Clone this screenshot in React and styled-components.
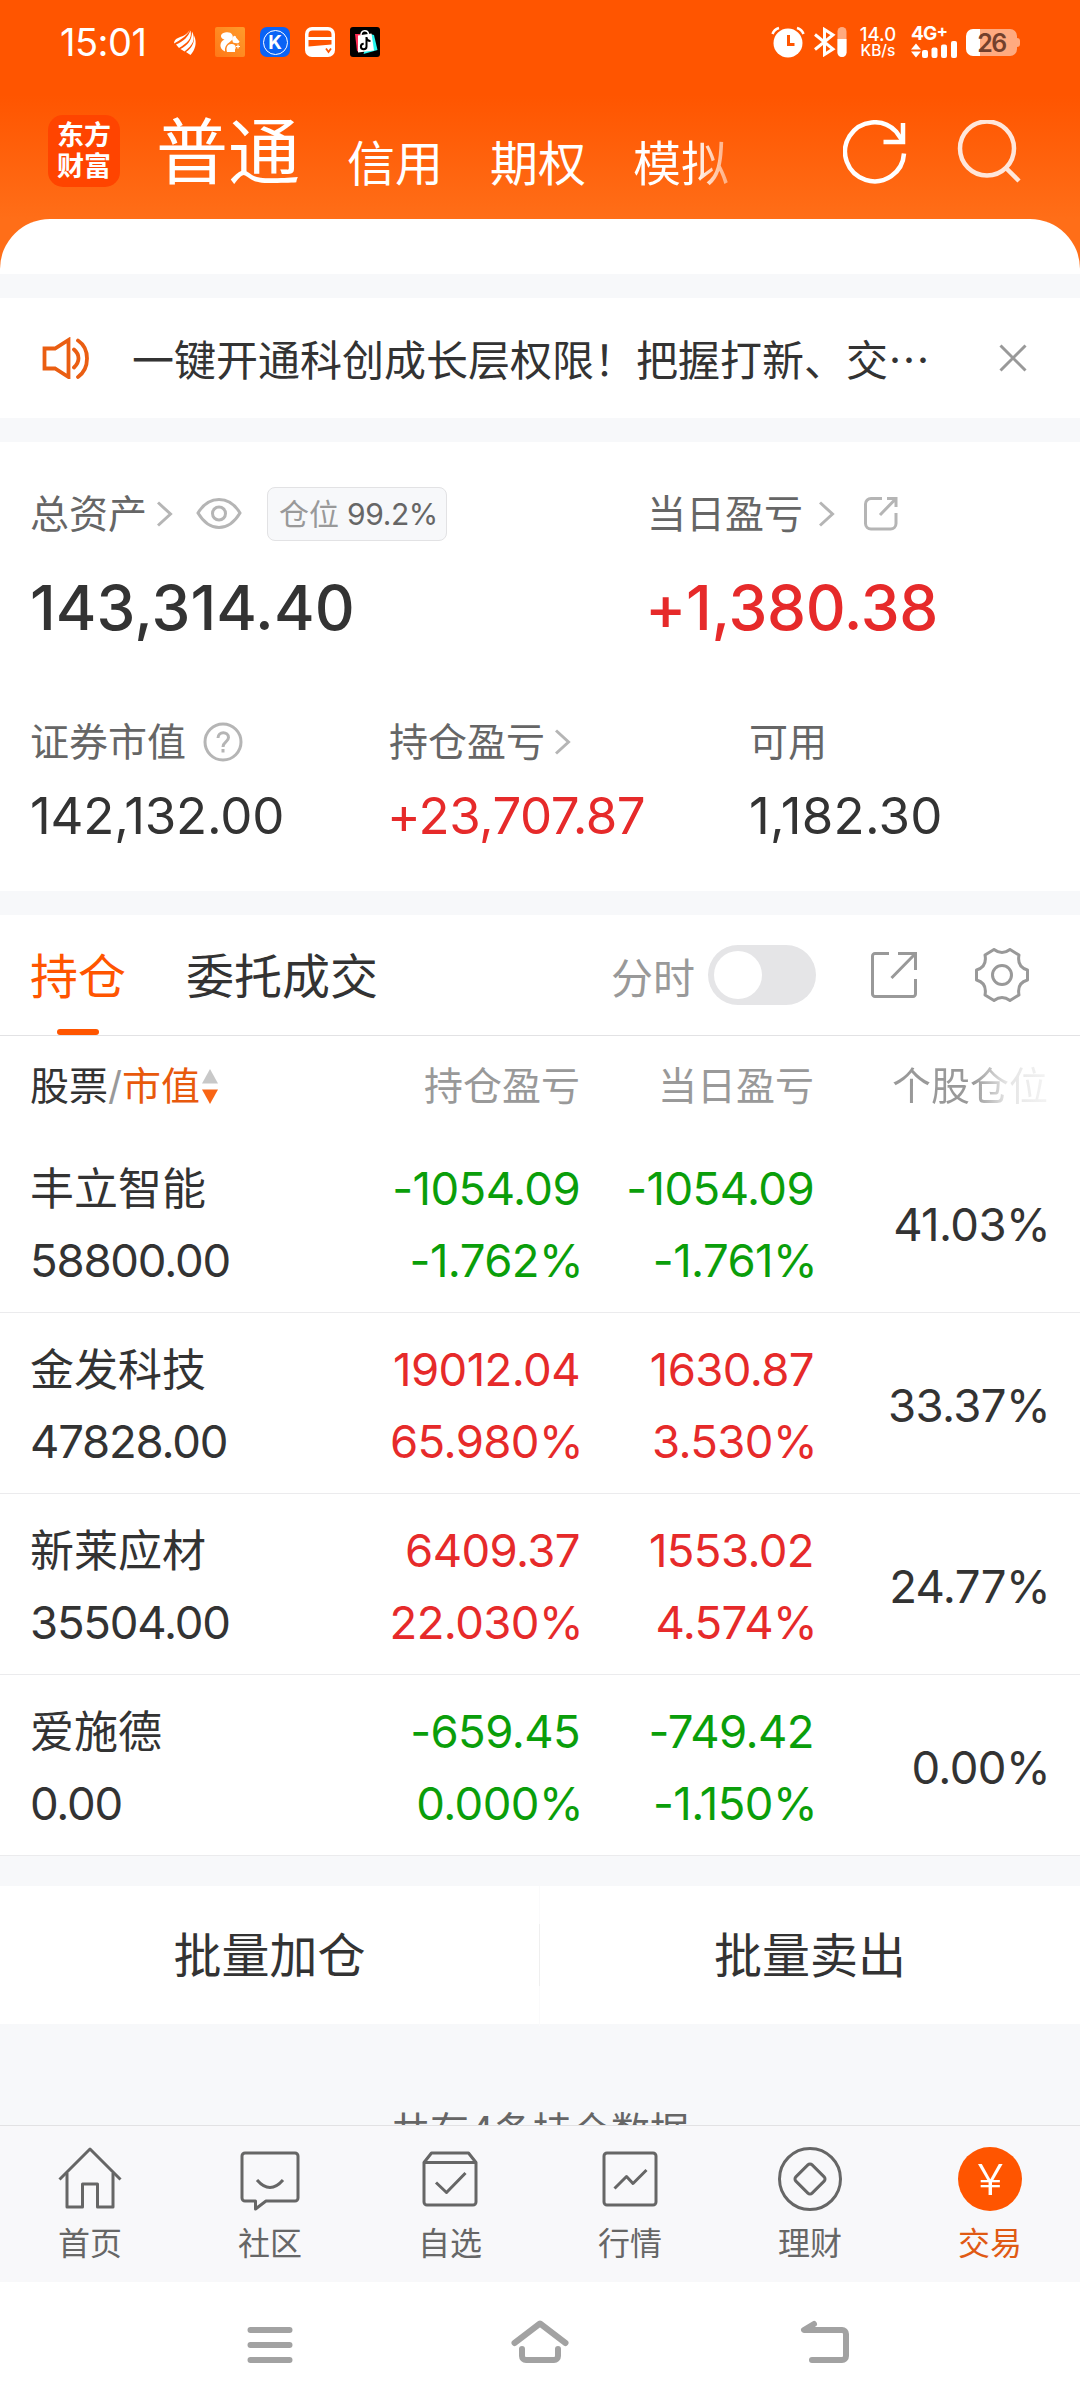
import React, { useState } from "react";
import styled, { createGlobalStyle, css } from "styled-components";

const COLORS = {
  orange: "#ff5500",
  text: "#333333",
  label: "#666666",
  muted: "#999999",
  icon: "#b5b5b5",
  up: "#e62a2a",
  down: "#0a9e0a",
  page: "#f7f8fa",
  line: "#e2e2e4",
};

const GlobalStyle = createGlobalStyle`
  * {
    box-sizing: border-box;
  }
  body {
    margin: 0;
    background: #fff;
    color: ${COLORS.text};
    font-family: Inter, "Noto Sans CJK SC", sans-serif;
  }
  svg {
    display: block;
    flex: none;
  }
`;

const Screen = styled.div`
  width: 1080px;
  height: 2408px;
  display: flex;
  flex-direction: column;
  overflow: hidden;
  background: ${COLORS.page};
  white-space: nowrap;
`;

/* ---------- header ---------- */

const Header = styled.header`
  height: 274px;
  flex: none;
  display: flex;
  flex-direction: column;
  color: #fff;
  background: linear-gradient(#ff5500 95px, #ff6e18 219px);
`;

const StatusBar = styled.div`
  height: 84px;
  padding: 0 60px;
  display: flex;
  align-items: center;
  justify-content: space-between;
`;

const Clock = styled.span`
  width: 97px;
  font-size: 38px;
  line-height: 85px;
  letter-spacing: -0.5px;
`;

const StatusGroup = styled.div`
  display: flex;
  align-items: center;
  gap: ${(props) => props.gap};
`;

const AppBadge = styled.span`
  width: 30px;
  height: 30px;
  border-radius: 7px;
  display: flex;
  align-items: center;
  justify-content: center;
  background: #0a63f5;

  span {
    width: 25px;
    height: 25px;
    border: 1px solid #fff;
    border-radius: 50%;
    font-size: 19px;
    font-weight: 700;
    line-height: 23px;
    text-align: center;
  }
`;

const NetSpeed = styled.div`
  width: 38px;
  margin: 0 5px 0 3px;
  display: flex;
  flex-direction: column;
  align-items: center;
  font-size: 18.5px;
  font-weight: 500;
  line-height: 16px;

  small {
    font-size: 15.5px;
    line-height: 17px;
  }
`;

const Signal = styled.div`
  width: 46px;
  font-size: 19px;
  font-weight: 700;
  line-height: 14px;
  letter-spacing: -0.8px;

  sup {
    font-size: 17px;
    line-height: 0;
    vertical-align: 3px;
  }
`;

const Battery = styled.div`
  width: 51px;
  height: 27px;
  border-radius: 7px;
  color: #74402c;
  font-size: 25px;
  font-weight: 600;
  line-height: 28px;
  text-align: center;
  letter-spacing: -1.5px;
  background: linear-gradient(90deg, #fff 14px, #ffaa80 14px);
`;

const BatteryTip = styled.i`
  width: 3px;
  height: 9px;
  border-radius: 0 3px 3px 0;
  background: #ffaa80;
`;

const TitleBar = styled.div`
  height: 135px;
  padding: 0 59px 0 48px;
  display: flex;
  align-items: flex-start;
`;

const Logo = styled.div`
  width: 72px;
  height: 72px;
  margin: 31px 36px 0 0;
  padding: 3px 0 0 9px;
  border-radius: 15px;
  background: #ff4400;
  font-family: "Noto Sans CJK SC", sans-serif;
  font-size: 27px;
  font-weight: 700;
  line-height: 31px;
  white-space: normal;
  word-break: break-all;
`;

const AccountTabs = styled.nav`
  flex: 1;
  display: flex;
  align-items: flex-start;
  gap: 47px;
`;

const AccountTab = styled.span`
  margin-top: ${(props) => (props.active ? "24px" : "36px")};
  font-size: ${(props) => (props.active ? "72px" : "48px")};
  line-height: 88px;
  ${(props) =>
    props.faded &&
    css`
      color: transparent;
      background: linear-gradient(90deg, #fff 60px, rgba(255, 255, 255, 0.45) 96px);
      background-clip: text;
    `}
`;

const HeaderIcons = styled.div`
  display: flex;
  gap: 50px;
  padding-top: 36px;
`;

const Sheet = styled.div`
  height: 55px;
  border-radius: 50px 50px 0 0;
  background: #fff;
`;

/* ---------- notice ---------- */

const Notice = styled.section`
  height: 120px;
  flex: none;
  margin: 24px 0;
  padding: 0 53px 0 42px;
  display: flex;
  align-items: center;
  background: #fff;
`;

const NoticeText = styled.p`
  flex: 1;
  margin: 0 0 0 42px;
  font-family: "Noto Sans CJK SC", sans-serif;
  font-size: 42px;
  line-height: 60px;
`;

/* ---------- assets ---------- */

const Assets = styled.section`
  height: 449px;
  flex: none;
  padding: 45px 30px 0;
  background: #fff;
`;

const AssetRow = styled.div`
  display: grid;
  grid-template-columns: ${(props) => props.columns};
  margin-bottom: ${(props) => props.space || 0};
`;

const Label = styled.div`
  height: 54px;
  display: flex;
  align-items: center;
  color: ${COLORS.label};
  font-size: 39px;
  line-height: 54px;
`;

const IconBox = styled.span`
  margin-left: ${(props) => props.gap};
`;

const Ratio = styled.span`
  width: 180px;
  height: 54px;
  margin-left: 25px;
  padding-left: 11px;
  border: 1px solid ${COLORS.line};
  border-radius: 8px;
  background: ${COLORS.page};
  color: ${COLORS.muted};
  font-size: 30px;
  line-height: 53px;

  b {
    margin-left: 8px;
    color: ${COLORS.label};
    font-weight: 400;
    letter-spacing: -0.4px;
  }
`;

const Amount = styled.div`
  color: ${(props) => (props.up ? COLORS.up : COLORS.text)};
  font-size: ${(props) => (props.large ? "62px" : "51px")};
  font-weight: ${(props) => (props.large ? 500 : 400)};
  line-height: 76px;
  margin-top: ${(props) => (props.large ? "29px" : "9px")};
  margin-left: ${(props) => (props.up ? "-2px" : "0")};
  letter-spacing: ${(props) => props.track || "0"};
`;

/* ---------- positions ---------- */

const TabBar = styled.div`
  height: 121px;
  flex: none;
  margin-top: 24px;
  padding: 0 51px 0 30px;
  display: flex;
  align-items: center;
  background: #fff;
  border-bottom: 1px solid ${COLORS.line};
`;

const Tab = styled.span`
  position: relative;
  height: 120px;
  margin-right: 60px;
  color: ${(props) => (props.active ? COLORS.orange : COLORS.text)};
  font-size: 48px;
  line-height: 123px;

  ${(props) =>
    props.active &&
    css`
      &::after {
        content: "";
        position: absolute;
        left: 27px;
        bottom: 0;
        width: 42px;
        height: 6px;
        border-radius: 3px;
        background: ${COLORS.orange};
      }
    `}
`;

const ToggleLabel = styled.span`
  margin: 0 13px 0 auto;
  color: ${COLORS.muted};
  font-size: 42px;
`;

const Toggle = styled.button`
  width: 108px;
  height: 60px;
  margin-right: 55px;
  padding: 6px;
  border: 0;
  border-radius: 30px;
  background: #e5e5e7;
  display: flex;
  justify-content: ${(props) => (props.on ? "flex-end" : "flex-start")};

  &::before {
    content: "";
    width: 48px;
    height: 48px;
    border-radius: 50%;
    background: #fff;
  }
`;

const gridColumns = css`
  display: grid;
  grid-template-columns: 331px 219px 234px 1fr;
  padding: 0 32px 0 30px;
  background: #fff;
`;

const TableHead = styled.div`
  ${gridColumns}
  height: 96px;
  flex: none;
  color: ${COLORS.muted};
  font-size: 39px;
  line-height: 99px;
  text-align: right;
`;

const SortHead = styled.div`
  display: flex;
  align-items: center;
  color: ${COLORS.text};

  i {
    color: ${COLORS.muted};
    font-style: normal;
  }
  b {
    margin-right: 2px;
    color: #e8590c;
    font-weight: 400;
  }
`;

const FadedHead = styled.div`
  color: transparent;
  background: linear-gradient(90deg, ${COLORS.muted} 68%, #e4e4e4 82%, #f2f2f2 98%);
  background-clip: text;
`;

const Row = styled.div`
  ${gridColumns}
  height: 181px;
  flex: none;
  padding-top: 21px;
  border-bottom: 1px solid #ebebed;
  font-size: 45.5px;
  line-height: 72px;
`;

const Cell = styled.div`
  text-align: right;
  letter-spacing: -0.6px;
  color: ${(props) => COLORS[props.tone] || COLORS.text};
`;

const Percent = styled.span`
  display: block;
  margin-right: -3px;
`;

const NameCell = styled.div`
  letter-spacing: -1.2px;

  span {
    display: block;
    font-size: 44px;
    letter-spacing: 0;
  }
`;

const RatioCell = styled(Cell)`
  margin-right: -2px;
  line-height: 144px;
`;

/* ---------- batch actions ---------- */

const Actions = styled.div`
  height: 138px;
  flex: none;
  margin-top: 30px;
  display: grid;
  grid-template-columns: 539px 1px 1fr;
  background: #fff;
  font-size: 48px;
  line-height: 140px;
  text-align: center;

  i {
    background: linear-gradient(#fafafb 38px, #efefef 38px 100px, #fafafb 100px);
  }
`;

const Footnote = styled.div`
  height: 101px;
  flex: none;
  padding-top: 80px;
  overflow: hidden;
  color: ${COLORS.label};
  font-size: 39px;
  line-height: 54px;
  text-align: center;
`;

/* ---------- bottom bars ---------- */

const NavBar = styled.nav`
  height: 157px;
  flex: none;
  display: grid;
  grid-template-columns: repeat(6, 1fr);
  border-top: 1px solid ${COLORS.line};
  background: #f8f8fa;
`;

const NavItem = styled.div`
  display: flex;
  flex-direction: column;
  align-items: center;
  gap: 13px;
  padding-top: 21px;
  color: ${(props) => (props.active ? "#e05a14" : COLORS.label)};
  font-size: 32px;
  line-height: 40px;
`;

const YuanBadge = styled.span`
  width: 64px;
  height: 64px;
  border-radius: 50%;
  background: ${COLORS.orange};
  color: #fff;
  font-size: 42px;
  font-weight: 300;
  line-height: 65px;
  text-align: center;

  span {
    display: inline-block;
    transform: scaleX(1.15);
  }
`;

const SystemBar = styled.div`
  height: 126px;
  flex: none;
  padding: 0 228px;
  display: flex;
  align-items: center;
  justify-content: space-between;
  background: #fff;
`;

/* ---------- icons ---------- */

const Stroke = ({ w, h, color = "currentColor", width = 3, children, ...rest }) => (
  <svg
    width={w}
    height={h}
    viewBox={`0 0 ${w} ${h}`}
    fill="none"
    stroke={color}
    strokeWidth={width}
    {...rest}
  >
    {children}
  </svg>
);

const Chevron = () => (
  <Stroke w={16} h={26} color={COLORS.icon}>
    <path d="M1 1.500 13.500 13 1 24.500" />
  </Stroke>
);

const EyeIcon = () => (
  <Stroke w={46} h={32} color={COLORS.icon}>
    <path d="M2 15C8 5 15 1.500 23 1.500s15 3.500 21 13.500C38 25 31 29.500 23 29.500S8 25 2 15Z" />
    <circle cx="23" cy="15.500" r="6.500" />
  </Stroke>
);

const HelpIcon = () => (
  <Stroke w={40} h={40} color={COLORS.icon}>
    <circle cx="20" cy="20" r="18" />
    <path d="M15 16c0-7 10.500-7 10.500-.5 0 4.500-5.500 4.500-5.500 9.500" />
    <path d="M20 27v3.500" />
  </Stroke>
);

const ShareSmallIcon = () => (
  <Stroke w={34} h={34} color={COLORS.icon}>
    <path d="M18 1.500H7A5.500 5.500 0 0 0 1.500 7v19.500A5.500 5.500 0 0 0 7 32h19.500a5.500 5.500 0 0 0 5.500-5.500V16" />
    <path d="M23 1.500h9V10M32 1.500 16 18" />
  </Stroke>
);

const ShareIcon = () => (
  <Stroke w={46} h={46} color={COLORS.muted}>
    <path d="M18 1.500H4A2.500 2.500 0 0 0 1.500 4v38A2.500 2.500 0 0 0 4 44.500h38a2.500 2.500 0 0 0 2.500-2.500V27" />
    <path d="M27 1.500h17.500V18M44.500 1.500 20.500 26" />
  </Stroke>
);

const GearIcon = () => (
  <Stroke w={54} h={54} color={COLORS.muted} strokeLinejoin="round">
    <path d="M19 1.500q8 6 16 0L44 7c-1.500 8 1 13 8.500 15v10c-7.500 2-10 7-8.500 15l-9 5.500q-8-6-16 0L10 47c1.500-8-1-13-8.500-15V22C9 20 11.500 15 10 7Z" />
    <circle cx="27" cy="27" r="9.500" />
  </Stroke>
);

const SortIcon = () => (
  <svg width="16" height="36" viewBox="0 0 16 36">
    <path d="M8 1l8 14.500H0z" fill="#c8c8c8" />
    <path d="M8 36l8-14.500H0z" fill="#f96515" />
  </svg>
);

const SpeakerIcon = () => (
  <Stroke w={48} h={42} color="#ea5e12" width={3.8} strokeLinecap="round">
    <path d="M2.500 11.500H13L26.500 3v37L13 31.500H2.500Z" />
    <path d="M32 12.500c6 5 6 12.500 0 18M36 3.500c12 8 12 28 0 36.500" />
  </Stroke>
);

const CloseIcon = () => (
  <Stroke w={28} h={28} color={COLORS.muted}>
    <path d="M1.500 1.500l25 25M26.500 1.500l-25 25" />
  </Stroke>
);

const RefreshIcon = () => (
  <Stroke w={64} h={64} width={4.5}>
    <path d="M61 33.500A29.500 29.500 0 1 1 53 11.500L59 20" />
    <path d="M60 3v19H40.500" />
  </Stroke>
);

const SearchIcon = () => (
  <Stroke w={64} h={66} width={4.5} color="#ffe6da">
    <circle cx="30" cy="28.500" r="27" />
    <path d="M48.500 47.500 62 61" />
  </Stroke>
);

const navIcons = {
  home: (
    <>
      <path d="M1.500 32.500 32 2 62.500 32.500" />
      <path d="M9 26v34h15.500V37h15v23H55V26" />
    </>
  ),
  chat: (
    <>
      <path d="M7 6h50a3 3 0 0 1 3 3v42a3 3 0 0 1-3 3H28l-10.500 8V54H7a3 3 0 0 1-3-3V9a3 3 0 0 1 3-3Z" />
      <path d="M19 33q13 15 26 0" />
    </>
  ),
  pick: (
    <>
      <path d="M6 15.500 13.500 6h37L58 15.500V55a3 3 0 0 1-3 3H9a3 3 0 0 1-3-3ZM6 15.500h52" />
      <path d="M18 35.500 28.500 45.500 47.500 26" />
    </>
  ),
  market: (
    <>
      <rect x="6" y="6" width="52" height="52" rx="3" />
      <path d="M16.500 41.500 28.500 29.500 35 36.500 48.500 23" />
    </>
  ),
  wealth: (
    <>
      <circle cx="32" cy="32" r="30.500" />
      <rect x="20.500" y="20.500" width="23" height="23" rx="3" transform="rotate(45 32 32)" />
    </>
  ),
};

const AlarmIcon = () => (
  <svg width="34" height="32" viewBox="0 0 34 32" fill="none">
    <circle cx="17" cy="17" r="14.500" fill="#fff" />
    <path d="M17.500 9v9.500h6" stroke={COLORS.orange} strokeWidth="3" />
    <path d="M1.500 8Q3 3.500 8 2M32.500 8Q31 3.500 26 2" stroke="#fff" strokeWidth="2.500" />
  </svg>
);

const BluetoothIcon = () => (
  <svg width="33" height="30" viewBox="0 0 33 30" fill="none">
    <path d="M1 7.500 19 22 10.500 27.500v-25L19 8 1 22.500" stroke="#fff" strokeWidth="3" />
    <rect x="23.500" width="9" height="30" rx="4.500" fill="#ffaa80" />
    <path d="M23.500 12h9v13.500a4.500 4.500 0 0 1-9 0Z" fill="#fff" />
  </svg>
);

const SignalBars = () => (
  <svg width="46" height="17" viewBox="0 0 46 17" fill="#fff">
    <path d="M0 8.500 5 2.500 10 8.500ZM0 10.500 5 16.500 10 10.500Z" />
    <rect x="11" y="9" width="6" height="8" rx="2" />
    <rect x="20.500" y="6.500" width="6" height="10.500" rx="2" />
    <rect x="30" y="3.500" width="6" height="13.500" rx="2" />
    <rect x="40" y="0" width="6" height="17" rx="2" />
  </svg>
);

const WingIcon = () => (
  <svg width="26" height="25" viewBox="0 0 26 25" fill="#fff">
    <path d="M0 13.500C0 8 6 7.500 10 5.500 13 4 14 2 16 0 12 7 6 10 0 13.500Z" />
    <path d="M2 14.500C10 11 14 7 16.500 0.500 18.500 9 13 13 5 18Z" />
    <path d="M6.500 19C14 15 18 10 18 1.500 22 9 19 15 10.500 21.500Z" />
    <path d="M12 22C18 18 20.500 13 20 5.500 23.500 13 21 20 16.500 25Z" />
  </svg>
);

const SquirrelIcon = () => (
  <svg width="30" height="30" viewBox="0 0 30 30">
    <defs>
      <linearGradient id="squirrel" x1="0" y1="1" x2="1" y2="0">
        <stop offset="0" stopColor="#ff7818" />
        <stop offset="1" stopColor="#ff9c2b" />
      </linearGradient>
    </defs>
    <rect width="30" height="30" rx="2" fill="url(#squirrel)" />
    <path
      d="M10 24.500C3.500 21.500 4.500 14.500 9.500 12.500 4.500 11.500 5 6 10 5.500c6-1.500 9 2.500 7.500 6.500-1.500 3.500-8.500 4.500-7.500 12.500Z"
      fill="#fff"
    />
    <path d="M17 12c1.500-4.500 4-3.500 4-1.500l3.500 4c-.5 2.500-4 2-6.500 1Z" fill="#fff" />
    <path d="M12 25c-1.500-5 1-8.500 5-8 4 .5 4.500 4 3 5.500v2.500Z" fill="#fff" />
    <path d="M23 17.500v4M21 19.500h4" stroke="#fff" strokeWidth="1.200" />
  </svg>
);

const CardIcon = () => (
  <svg width="30" height="30" viewBox="0 0 30 30" fill="none">
    <rect width="30" height="30" rx="7" fill="#fff" />
    <path d="M3.500 10V7.500a4 4 0 0 1 4-4h15a4 4 0 0 1 4 4V10ZM3.500 13h23v4.500l-23 2Z" fill={COLORS.orange} />
    <path d="M21 21.500l2.500 3.500 2.500-3.500" stroke={COLORS.orange} strokeWidth="1.800" />
  </svg>
);

const ShopIcon = () => (
  <svg width="30" height="30" viewBox="0 0 30 30" fill="none">
    <rect width="30" height="30" rx="3" fill="#000" />
    <path d="M5 7h6l-2 18-2-1Z" fill="#fe2c55" />
    <path d="M20 7l4 1 3.500 15-14 4Z" fill="#25f4ee" />
    <path d="M8 8.500 21.500 6.500 24 23.500 8 25.500Z" fill="#fff" />
    <path d="M11 8c0-5.500 7-5.500 7.500-1" stroke="#fff" strokeWidth="1.500" />
    <path d="M16.500 10v9.500a2.800 2.800 0 1 1-2.800-2.800M16.500 10.500q.5 3.500 4 3.500" stroke="#000" strokeWidth="2" />
  </svg>
);

const positions = [
  {
    name: "丰立智能",
    value: "58800.00",
    total: ["-1054.09", "-1.762%"],
    today: ["-1054.09", "-1.761%"],
    share: "41.03%",
    tone: "down",
  },
  {
    name: "金发科技",
    value: "47828.00",
    total: ["19012.04", "65.980%"],
    today: ["1630.87", "3.530%"],
    share: "33.37%",
    tone: "up",
  },
  {
    name: "新莱应材",
    value: "35504.00",
    total: ["6409.37", "22.030%"],
    today: ["1553.02", "4.574%"],
    share: "24.77%",
    tone: "up",
  },
  {
    name: "爱施德",
    value: "0.00",
    total: ["-659.45", "0.000%"],
    today: ["-749.42", "-1.150%"],
    share: "0.00%",
    tone: "down",
  },
];

const navItems = [
  { icon: "home", text: "首页" },
  { icon: "chat", text: "社区" },
  { icon: "pick", text: "自选" },
  { icon: "market", text: "行情" },
  { icon: "wealth", text: "理财" },
];

function PositionRow({ item }) {
  return (
    <Row>
      <NameCell>
        <span>{item.name}</span>
        {item.value}
      </NameCell>
      <Cell tone={item.tone}>
        {item.total[0]}
        <Percent>{item.total[1]}</Percent>
      </Cell>
      <Cell tone={item.tone}>
        {item.today[0]}
        <Percent>{item.today[1]}</Percent>
      </Cell>
      <RatioCell>{item.share}</RatioCell>
    </Row>
  );
}

function App() {
  const [minute, setMinute] = useState(false);

  return (
    <>
      <GlobalStyle />
      <Screen>
        <Header>
          <StatusBar>
            <StatusGroup gap="17px">
              <Clock>15:01</Clock>
              <StatusGroup gap="15px">
                <WingIcon />
                <SquirrelIcon />
                <AppBadge>
                  <span>K</span>
                </AppBadge>
                <CardIcon />
                <ShopIcon />
              </StatusGroup>
            </StatusGroup>
            <StatusGroup gap="9px">
              <AlarmIcon />
              <BluetoothIcon />
              <NetSpeed>
                14.0
                <small>KB/s</small>
              </NetSpeed>
              <Signal>
                4G<sup>+</sup>
                <SignalBars />
              </Signal>
              <StatusGroup gap="0">
                <Battery>26</Battery>
                <BatteryTip />
              </StatusGroup>
            </StatusGroup>
          </StatusBar>
          <TitleBar>
            <Logo>东方财富</Logo>
            <AccountTabs>
              <AccountTab active>普通</AccountTab>
              <AccountTab>信用</AccountTab>
              <AccountTab>期权</AccountTab>
              <AccountTab faded>模拟</AccountTab>
            </AccountTabs>
            <HeaderIcons>
              <RefreshIcon />
              <SearchIcon />
            </HeaderIcons>
          </TitleBar>
          <Sheet />
        </Header>

        <Notice>
          <SpeakerIcon />
          <NoticeText>一键开通科创成长层权限！把握打新、交…</NoticeText>
          <CloseIcon />
        </Notice>

        <Assets>
          <AssetRow columns="617px 1fr" space="69px">
            <div>
              <Label>
                总资产
                <IconBox gap="10px">
                  <Chevron />
                </IconBox>
                <IconBox gap="23px">
                  <EyeIcon />
                </IconBox>
                <Ratio>
                  仓位<b>99.2%</b>
                </Ratio>
              </Label>
              <Amount large track="0.1px">
                143,314.40
              </Amount>
            </div>
            <div>
              <Label>
                当日盈亏
                <IconBox gap="16px">
                  <Chevron />
                </IconBox>
                <IconBox gap="29px">
                  <ShareSmallIcon />
                </IconBox>
              </Label>
              <Amount large up track="-0.3px">
                +1,380.38
              </Amount>
            </div>
          </AssetRow>
          <AssetRow columns="359px 360px 1fr">
            <div>
              <Label>
                证券市值
                <IconBox gap="17px">
                  <HelpIcon />
                </IconBox>
              </Label>
              <Amount track="-0.2px">142,132.00</Amount>
            </div>
            <div>
              <Label>
                持仓盈亏
                <IconBox gap="10px">
                  <Chevron />
                </IconBox>
              </Label>
              <Amount up track="-0.5px">
                +23,707.87
              </Amount>
            </div>
            <div>
              <Label>可用</Label>
              <Amount track="0.3px">1,182.30</Amount>
            </div>
          </AssetRow>
        </Assets>

        <TabBar>
          <Tab active>持仓</Tab>
          <Tab>委托成交</Tab>
          <ToggleLabel>分时</ToggleLabel>
          <Toggle on={minute} onClick={() => setMinute(!minute)} />
          <ShareIcon />
          <IconBox gap="58px">
            <GearIcon />
          </IconBox>
        </TabBar>
        <TableHead>
          <SortHead>
            股票<i>/</i>
            <b>市值</b>
            <SortIcon />
          </SortHead>
          <div>持仓盈亏</div>
          <div>当日盈亏</div>
          <FadedHead>个股仓位</FadedHead>
        </TableHead>
        {positions.map((item) => (
          <PositionRow key={item.name} item={item} />
        ))}

        <Actions>
          <span>批量加仓</span>
          <i />
          <span>批量卖出</span>
        </Actions>
        <Footnote>共有4条持仓数据</Footnote>

        <NavBar>
          {navItems.map((item) => (
            <NavItem key={item.icon}>
              <Stroke w={64} h={64} strokeLinejoin="round">
                {navIcons[item.icon]}
              </Stroke>
              {item.text}
            </NavItem>
          ))}
          <NavItem active>
            <YuanBadge>
              <span>¥</span>
            </YuanBadge>
            交易
          </NavItem>
        </NavBar>

        <SystemBar>
          <Stroke w={84} h={44} color="#a2a2a2" width={6} strokeLinecap="round">
            <path d="M22.500 7h39M22.500 22h39M22.500 37h39" />
          </Stroke>
          <Stroke w={60} h={50} color="#a2a2a2" width={6} strokeLinecap="round" strokeLinejoin="round">
            <path d="M4.500 23 30 3.500 55.500 23M12 29v7a4 4 0 0 0 4 4h28a4 4 0 0 0 4-4v-7" />
          </Stroke>
          <Stroke w={84} h={50} color="#a2a2a2" width={6} strokeLinecap="round" strokeLinejoin="round">
            <path d="M46 4 36 10h38a4 4 0 0 1 4 4v22a4 4 0 0 1-4 4H44" />
          </Stroke>
        </SystemBar>
      </Screen>
    </>
  );
}

export default App;
